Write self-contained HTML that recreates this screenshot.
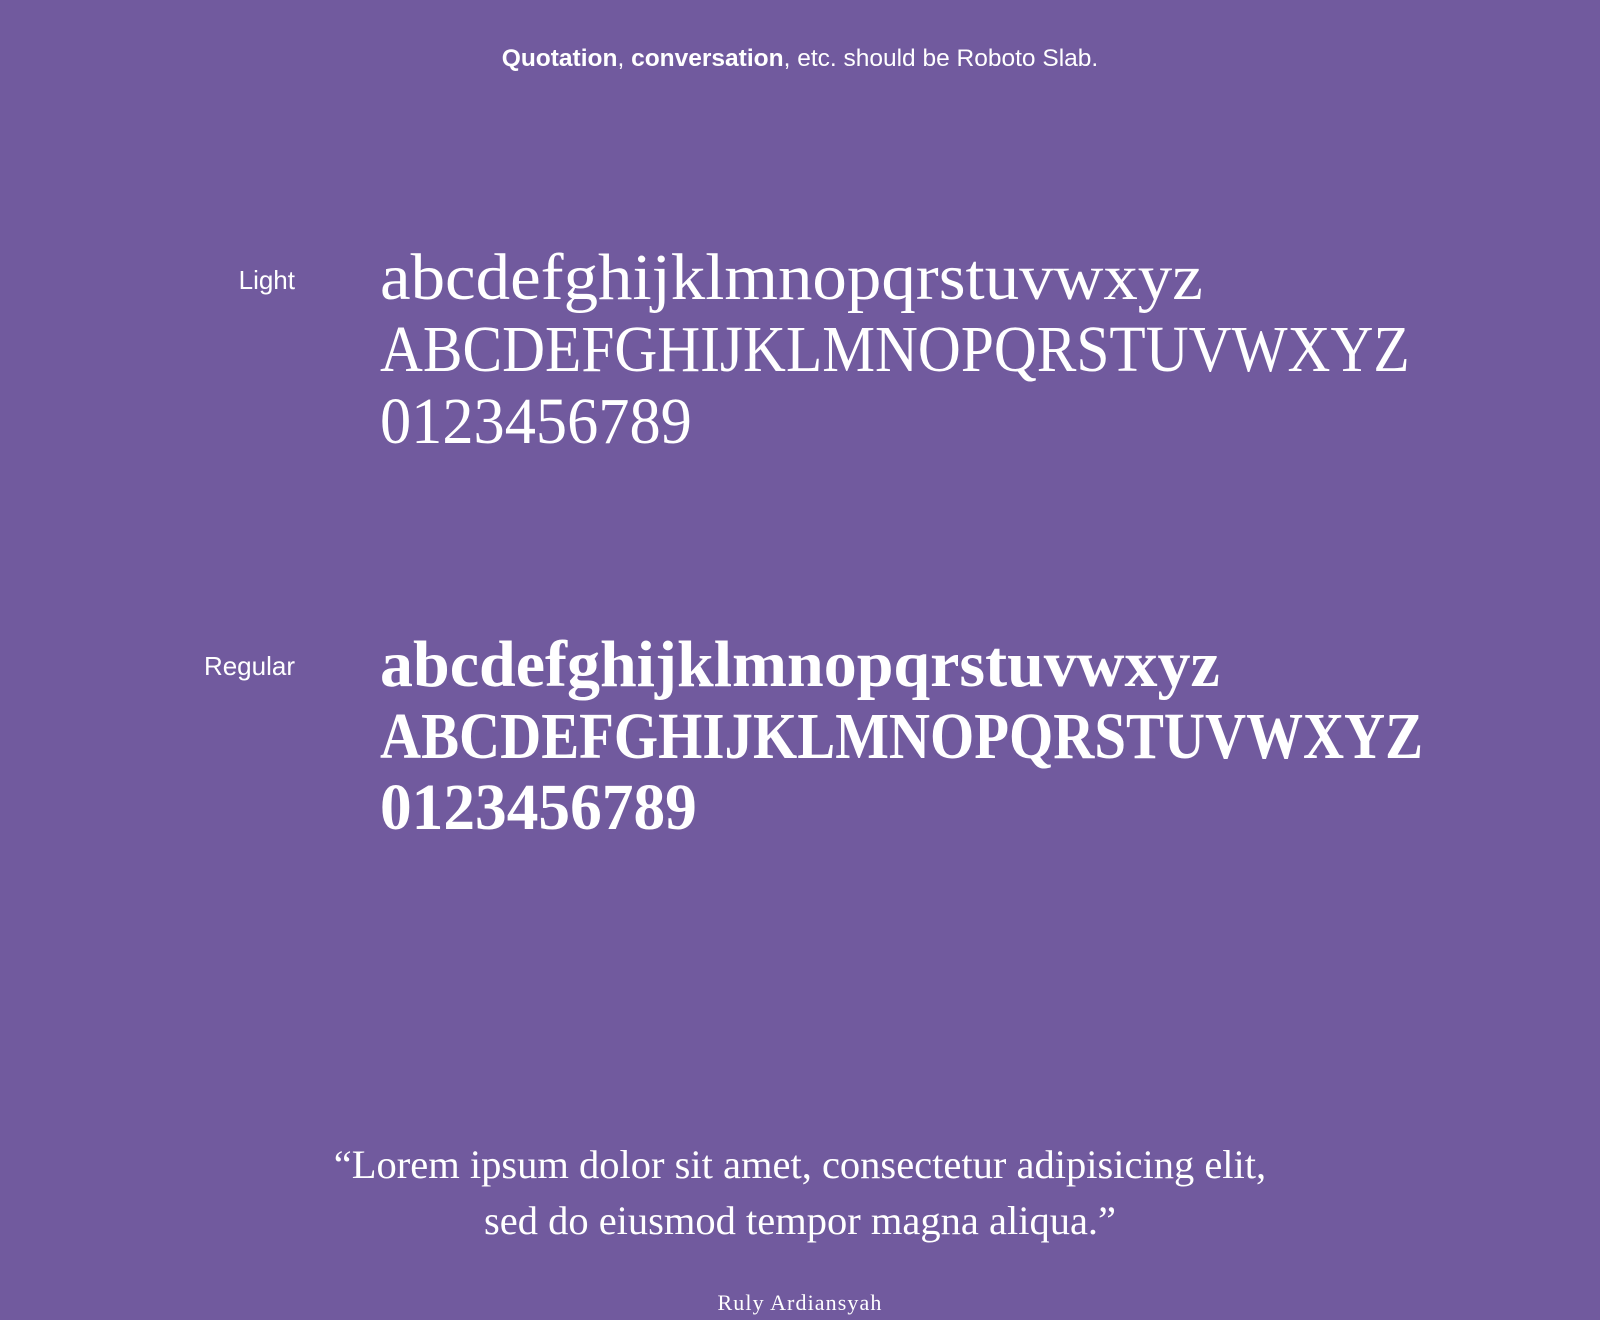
<!DOCTYPE html>
<html><head><meta charset="utf-8"><style>
html,body{margin:0;padding:0}
body{width:1600px;height:1320px;background:#715a9e;position:relative;overflow:hidden;color:#fff;font-family:"Liberation Serif",serif}
.top{position:absolute;top:44px;left:0;width:1600px;text-align:center;font-family:"Liberation Sans",sans-serif;font-size:24.5px;line-height:30px;font-weight:normal}
.top b{font-weight:700}
.lab{position:absolute;right:1305px;font-family:"Liberation Sans",sans-serif;font-size:26px;line-height:30px}
.blk{position:absolute;left:380px;font-size:66px;line-height:72px;white-space:nowrap}
.blk div{transform-origin:left center;width:max-content}
.q{position:absolute;left:0;width:1600px;text-align:center;font-size:40.5px;line-height:56px}
.a{position:absolute;left:0;width:1600px;text-align:center;font-size:22px;letter-spacing:1.1px;top:1290px;line-height:26px}
</style></head><body>
<div class="top"><b>Quotation</b>, <b>conversation</b>, etc. should be Roboto Slab.</div>
<div class="lab" style="top:265px">Light</div>
<div class="blk" style="top:242px">
<div style="transform:scaleX(1.044)">abcdefghijklmnopqrstuvwxyz</div>
<div style="transform:scaleX(.90)">ABCDEFGHIJKLMNOPQRSTUVWXYZ</div>
<div style="transform:scaleX(.945)">0123456789</div>
</div>
<div class="lab" style="top:651px">Regular</div>
<div class="blk" style="top:629px;font-weight:bold;line-height:71.5px">
<div style="transform:scaleX(1.0)">abcdefghijklmnopqrstuvwxyz</div>
<div style="transform:scaleX(.862)">ABCDEFGHIJKLMNOPQRSTUVWXYZ</div>
<div style="transform:scaleX(.96)">0123456789</div>
</div>
<div class="q" style="top:1137px">“Lorem ipsum dolor sit amet, consectetur adipisicing elit,</div>
<div class="q" style="top:1193px">sed do eiusmod tempor magna aliqua.”</div>
<div class="a">Ruly Ardiansyah</div>
</body></html>
